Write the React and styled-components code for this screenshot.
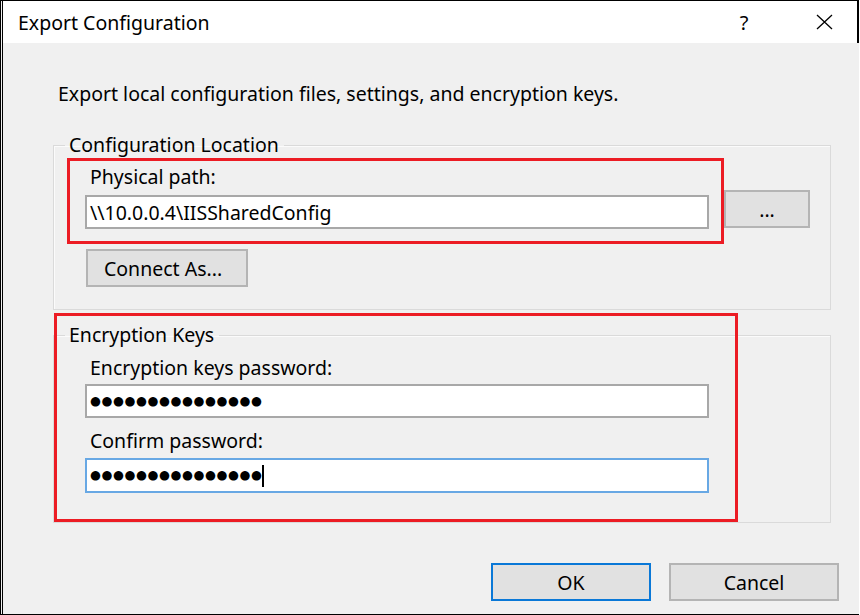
import React from "react";
import styled, { createGlobalStyle } from "styled-components";

const GlobalStyle = createGlobalStyle`
  html, body {
    margin: 0;
    padding: 0;
    background: #ffffff;
  }
  body {
    font-family: "Segoe UI", "Noto Sans", "Open Sans", sans-serif;
    color: #000;
  }
`;

const Window = styled.div`
  position: relative;
  box-sizing: border-box;
  width: 859px;
  height: 615px;
  border-top: 1px solid #000;
  border-bottom: 1px solid #000;
  border-left: 3px double #000;
  background: #f0f0f0;
  display: flex;
  flex-direction: column;
  font-size: 19.5px;
`;

const TitleBar = styled.div`
  height: 42px;
  background: #fff;
  border-right: 2px solid #000;
  display: flex;
  align-items: center;
  padding-left: 15px;
`;

const Title = styled.div`
  flex: 1;
`;

const TitleButton = styled.div`
  width: 40px;
  height: 42px;
  margin: ${(p) => p.$m || "0"};
  display: flex;
  align-items: center;
  justify-content: center;
  font-size: 20px;
`;

const Body = styled.div`
  flex: 1;
  display: flex;
  flex-direction: column;
  padding: 0 28px 0 50px;
`;

const Description = styled.p`
  margin: 39px 0 0 5px;
  line-height: 24px;
`;

const Group = styled.fieldset`
  margin: ${(p) => p.$mt}px 0 0 0;
  padding: 0;
  border: 1px solid #dadada;
  box-shadow: inset 1px 1px 0 #fbfbfb;
  min-width: 0;
`;

const Legend = styled.legend`
  margin-left: 11px;
  padding: 0 5px 0 4px;
  line-height: 22px;
`;

const GroupContent = styled.div`
  display: flex;
  flex-direction: column;
  padding: ${(p) => p.$pt}px 20px ${(p) => p.$pb}px 31px;
`;

const Label = styled.div`
  line-height: 24px;
  margin: ${(p) => p.$mt}px 0 0 5px;
`;

const Row = styled.div`
  display: flex;
  align-items: flex-start;
  gap: 15px;
  margin-top: ${(p) => p.$mt}px;
`;

const Field = styled.div`
  box-sizing: border-box;
  width: 624px;
  height: ${(p) => p.$h || 34}px;
  margin-top: ${(p) => p.$mt || 0}px;
  background: #fff;
  border: 2px solid ${(p) => (p.$focused ? "#68a8e4" : "#a8a8a8")};
  display: flex;
  align-items: center;
  padding-left: 3px;
  white-space: nowrap;
`;

const Masked = styled.span`
  font-family: "DejaVu Sans", sans-serif;
  font-size: 12.5px;
  letter-spacing: 0.6px;
  line-height: 1;
`;

const Caret = styled.span`
  display: inline-block;
  width: 2px;
  height: 22px;
  background: #000;
  margin-left: -1px;
`;

const Button = styled.div`
  box-sizing: border-box;
  width: ${(p) => p.$w}px;
  height: 38px;
  margin: ${(p) => p.$m || "0"};
  background: #e1e1e1;
  border: ${(p) => (p.$default ? "2px solid #0a78d7" : "2px solid #b4b4b4")};
  display: flex;
  align-items: center;
  justify-content: ${(p) => (p.$left ? "flex-start" : "center")};
  padding-left: ${(p) => (p.$left ? 16 : 0)}px;
  flex-shrink: 0;
`;

const Footer = styled.div`
  display: flex;
  justify-content: flex-end;
  gap: 18px;
  margin: 40px -8px 0 0;
`;

const Highlight = styled.div`
  position: absolute;
  box-sizing: border-box;
  left: ${(p) => p.$x}px;
  top: ${(p) => p.$y}px;
  width: ${(p) => p.$w}px;
  height: ${(p) => p.$h}px;
  border: 3px solid #ec1c24;
  pointer-events: none;
`;

const CloseIcon = () => (
  <svg width="17" height="16" viewBox="0 0 17 16">
    <path d="M1 1 L16 15 M16 1 L1 15" stroke="#000" strokeWidth="1.3" fill="none" />
  </svg>
);

const dots = "●".repeat(15);

export default function App() {
  return (
    <>
      <GlobalStyle />
      <Window>
        <TitleBar>
          <Title>Export Configuration</Title>
          <TitleButton>?</TitleButton>
          <TitleButton $m="0 13px 0 40px">
            <CloseIcon />
          </TitleButton>
        </TitleBar>
        <Body>
          <Description>
            Export local configuration files, settings, and encryption keys.
          </Description>

          <Group $mt={28}>
            <Legend>Configuration Location</Legend>
            <GroupContent $pt={9} $pb={22}>
              <Label $mt={0}>Physical path:</Label>
              <Row $mt={1}>
                <Field $mt={5}>\\10.0.0.4\IISSharedConfig</Field>
                <Button $w={86}>...</Button>
              </Row>
              <Button $w={162} $left $m="20px 0 0 1px">
                Connect As...
              </Button>
            </GroupContent>
          </Group>

          <Group $mt={14}>
            <Legend>Encryption Keys</Legend>
            <GroupContent $pt={10} $pb={29}>
              <Label $mt={0}>Encryption keys password:</Label>
              <Field $mt={4}>
                <Masked>{dots}</Masked>
              </Field>
              <Label $mt={11}>Confirm password:</Label>
              <Field $mt={5} $h={35} $focused>
                <Masked>{dots}</Masked>
                <Caret />
              </Field>
            </GroupContent>
          </Group>

          <Footer>
            <Button $w={160} $default>
              OK
            </Button>
            <Button $w={170}>Cancel</Button>
          </Footer>
        </Body>

        <Highlight $x={64} $y={157} $w={657} $h={86} />
        <Highlight $x={51} $y={312} $w={684} $h={209} />
      </Window>
    </>
  );
}
